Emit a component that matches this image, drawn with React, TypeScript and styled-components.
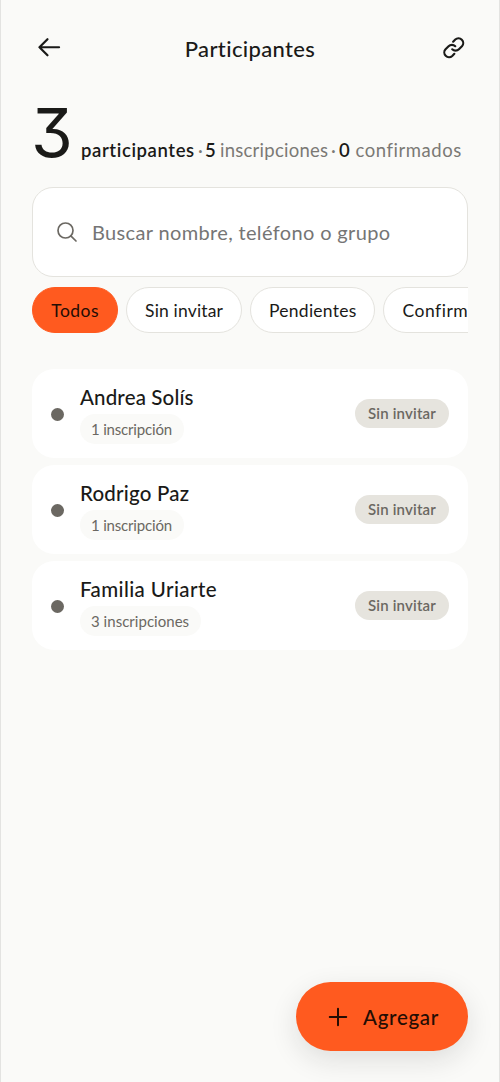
import React from 'react';
import styled, { createGlobalStyle } from 'styled-components';

const Global = createGlobalStyle`
  *, *::before, *::after { box-sizing: border-box; }
  body {
    margin: 0;
    background: #fafaf8;
    color: #1a1a18;
    font-family: Lato, "Liberation Sans", sans-serif;
    font-variant-ligatures: none;
  }
  button { font: inherit; color: inherit; border: 0; background: none; padding: 0; cursor: pointer; }
`;

const Screen = styled.main`
  position: relative;
  display: flex;
  flex-direction: column;
  width: 100%;
  height: 1082px;
  padding: 26px 31px 31px;
  border: solid #e3e3e1;
  border-width: 0 1px;
  overflow: hidden;
`;

const Header = styled.header`
  display: flex;
  align-items: center;
  justify-content: space-between;
  height: 43px;
  padding: 0 0 0 3px;
`;

const Title = styled.h1`
  margin: 2px 4px 0 0;
  font-size: 22px;
  line-height: 28px;
  font-weight: 500;
  letter-spacing: 0.35px;
`;

const IconButton = styled.button`
  display: flex;
`;

const Summary = styled.section`
  display: flex;
  align-items: baseline;
  height: 88px;
  margin: 29px 0 1px -1px;
  line-height: 70px;
`;

const BigCount = styled.span`
  width: 50px;
  font-family: Inter, Lato, sans-serif;
  font-feature-settings: "cv09" 1;
  font-size: 67.5px;
  font-weight: 400;
`;

const Stats = styled.p`
  display: flex;
  margin: 0;
  font-size: 18.5px;
  line-height: 24px;
  white-space: nowrap;
`;

const Stat = styled.span<{ $strong?: boolean; $width: number; $track?: number }>`
  flex: 0 0 ${p => p.$width}px;
  font-weight: ${p => (p.$strong ? 600 : 400)};
  color: ${p => (p.$strong ? '#1a1a18' : '#7b7975')};
  letter-spacing: ${p => p.$track ?? 0}px;
`;

const SearchBox = styled.label`
  display: flex;
  align-items: center;
  flex: none;
  gap: 13px;
  height: 90px;
  padding: 0 22px;
  border: 1px solid #e4e3de;
  border-radius: 21px;
  background: #fff;
`;

const SearchInput = styled.input`
  flex: 1;
  min-width: 0;
  padding: 0;
  border: 0;
  outline: 0;
  background: none;
  font: 400 20px/28px Lato, sans-serif;
  letter-spacing: 0.35px;
  &::placeholder { color: #757575; opacity: 1; }
`;

const Filters = styled.nav`
  display: flex;
  flex: none;
  gap: 8px;
  margin-top: 10px;
  overflow: hidden;
`;

const Chip = styled.button<{ $active?: boolean; $track: number }>`
  flex: none;
  height: 46px;
  && { padding: 0 17.8px 0 18.2px; }
  && { border: 1px solid ${p => (p.$active ? '#ff5a1f' : '#e4e3de')}; }
  border-radius: 23px;
  && { background: ${p => (p.$active ? '#ff5a1f' : '#fff')}; }
  && { color: ${p => (p.$active ? '#240d04' : '#1a1a18')}; }
  font-size: 17.5px;
  font-weight: 400;
  letter-spacing: ${p => p.$track}px;
  white-space: nowrap;
`;

const List = styled.ul`
  display: flex;
  flex-direction: column;
  gap: 7px;
  margin: 36px 0 0;
  padding: 0;
  list-style: none;
`;

const Row = styled.li`
  display: flex;
  align-items: center;
  height: 89px;
  padding: 0 19px;
  border-radius: 22px;
  background: #fff;
`;

const Dot = styled.span`
  width: 13px;
  height: 13px;
  margin-top: 1px;
  border-radius: 50%;
  background: #6b6862;
`;

const Person = styled.div`
  display: flex;
  flex: 1;
  flex-direction: column;
  align-items: flex-start;
  gap: 4px;
  margin-left: 16px;
`;

const Name = styled.span<{ $track: number }>`
  font-size: 20.5px;
  line-height: 26px;
  font-weight: 500;
  letter-spacing: ${p => p.$track}px;
`;

const Count = styled.span<{ $track: number }>`
  padding: 0 12px 0 11px;
  border-radius: 15px;
  background: #fafaf8;
  color: #6b6862;
  font-size: 15px;
  line-height: 30px;
  letter-spacing: ${p => p.$track}px;
`;

const Status = styled.span`
  padding: 0 13px;
  border-radius: 15px;
  background: #e6e4de;
  color: #6b6862;
  font-size: 15px;
  font-weight: 600;
  line-height: 29px;
  letter-spacing: 0.18px;
`;

const AddButton = styled.button`
  position: absolute;
  right: 31px;
  bottom: 31px;
  display: flex;
  align-items: center;
  justify-content: center;
  gap: 12.5px;
  width: 172px;
  height: 69px;
  border-radius: 35px;
  && { padding-left: 1.5px; background: #ff5a1f; color: #240d04; }
  box-shadow: 0 9px 28px rgba(26, 26, 24, 0.12);
  && { font-size: 20.5px; font-weight: 500; }
  letter-spacing: 0.7px;
`;

const Stroke = styled.svg`
  display: block;
  flex: none;
  fill: none;
  stroke: currentColor;
  stroke-linecap: round;
  stroke-linejoin: round;
`;

const filters = [
  { label: 'Todos', track: 0.5, active: true },
  { label: 'Sin invitar', track: 0.16 },
  { label: 'Pendientes', track: 0.25 },
  { label: 'Confirmados', track: 0.5 },
];

const people = [
  { name: 'Andrea Solís', track: 0.15, count: '1 inscripción', countTrack: -0.18 },
  { name: 'Rodrigo Paz', track: 0.2, count: '1 inscripción', countTrack: -0.18 },
  { name: 'Familia Uriarte', track: 0.4, count: '3 inscripciones', countTrack: 0.03 },
];

export default function App() {
  return (
    <>
      <Global />
      <Screen>
        <Header>
          <IconButton aria-label="Volver">
            <Stroke width="28.5" height="28.5" viewBox="0 0 256 256" strokeWidth="20">
              <path d="M216 128H40M112 56l-72 72 72 72" />
            </Stroke>
          </IconButton>
          <Title>Participantes</Title>
          <IconButton aria-label="Copiar enlace">
            <Stroke width="27.5" height="27.5" viewBox="0 0 256 256" strokeWidth="20">
              <path d="M122.3 71.4l19.8-19.8a44.1 44.1 0 0 1 62.3 62.3l-28.3 28.2a43.9 43.9 0 0 1-62.2 0" />
              <path d="M133.7 184.6l-19.8 19.8a44.1 44.1 0 0 1-62.3-62.3l28.3-28.2a43.9 43.9 0 0 1 62.2 0" />
            </Stroke>
          </IconButton>
        </Header>
        <Summary>
          <BigCount>3</BigCount>
          <Stats>
            <Stat $strong $width={117} $track={0.6}>participantes</Stat>
            <Stat $width={7}>·</Stat>
            <Stat $strong $width={15}>5</Stat>
            <Stat $width={111} $track={0.25}>inscripciones</Stat>
            <Stat $width={8}>·</Stat>
            <Stat $strong $width={16.5}>0</Stat>
            <Stat $width={108} $track={0.55}>confirmados</Stat>
          </Stats>
        </Summary>
        <SearchBox>
          <Stroke width="24" height="24" viewBox="0 0 256 256" strokeWidth="18" color="#6b6862">
            <circle cx="112" cy="112" r="80" />
            <path d="M168.6 168.6 224 224" />
          </Stroke>
          <SearchInput placeholder="Buscar nombre, teléfono o grupo" />
        </SearchBox>
        <Filters>
          {filters.map(f => (
            <Chip key={f.label} $active={f.active} $track={f.track}>{f.label}</Chip>
          ))}
        </Filters>
        <List>
          {people.map(p => (
            <Row key={p.name}>
              <Dot />
              <Person>
                <Name $track={p.track}>{p.name}</Name>
                <Count $track={p.countTrack}>{p.count}</Count>
              </Person>
              <Status>Sin invitar</Status>
            </Row>
          ))}
        </List>
        <AddButton>
          <Stroke width="24" height="24" viewBox="0 0 256 256" strokeWidth="21">
            <path d="M40 128h176M128 40v176" />
          </Stroke>
          Agregar
        </AddButton>
      </Screen>
    </>
  );
}
